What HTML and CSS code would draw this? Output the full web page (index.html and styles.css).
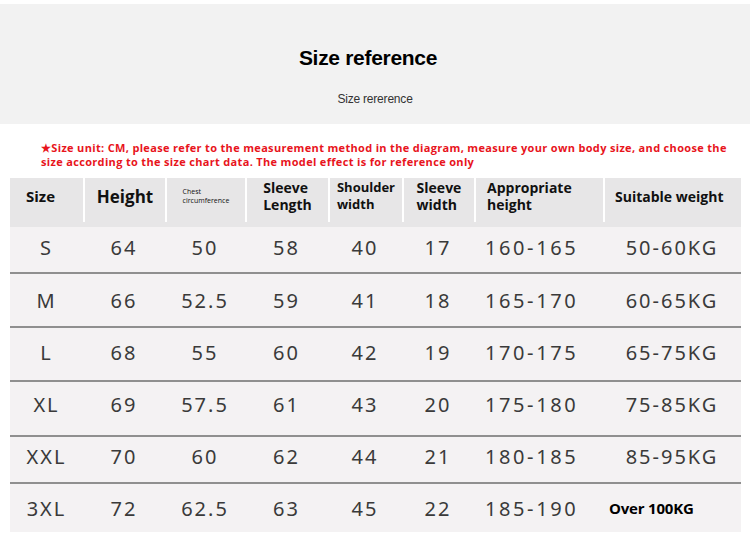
FILE: index.html
```html
<!DOCTYPE html>
<html>
<head>
<meta charset="utf-8">
<link rel="stylesheet" href="styles.css">
</head>
<body>
<div class="banner">
  <div class="title">Size reference</div>
  <div class="subtitle">Size rererence</div>
</div>
<p class="notice">★Size unit: CM, please refer to the measurement method in the diagram, measure your own body size, and choose the<br>size according to the size chart data. The model effect is for reference only</p>
<div class="chart">
  <div class="head">
    <div class="hc c-size"><span class="h15">Size</span></div>
    <div class="hc"><span class="h17">Height</span></div>
    <div class="hc"><span class="h7">Chest<br>circumference</span></div>
    <div class="hc"><span class="h14">Sleeve<br>Length</span></div>
    <div class="hc"><span class="h13">Shoulder<br>width</span></div>
    <div class="hc"><span class="h14">Sleeve<br>width</span></div>
    <div class="hc c-app"><span class="h14">Appropriate<br>height</span></div>
    <div class="hc c-wt"><span class="h14">Suitable weight</span></div>
  </div>
  <div class="row r1"><span>S</span><span>64</span><span>50</span><span>58</span><span>40</span><span>17</span><span class="rng">160-165</span><span>50-60KG</span></div>
  <div class="row r2"><span>M</span><span>66</span><span>52.5</span><span>59</span><span>41</span><span>18</span><span class="rng">165-170</span><span>60-65KG</span></div>
  <div class="row r3"><span>L</span><span>68</span><span>55</span><span>60</span><span>42</span><span>19</span><span class="rng">170-175</span><span>65-75KG</span></div>
  <div class="row r4"><span>XL</span><span>69</span><span>57.5</span><span>61</span><span>43</span><span>20</span><span class="rng">175-180</span><span>75-85KG</span></div>
  <div class="row r5"><span>XXL</span><span>70</span><span>60</span><span>62</span><span>44</span><span>21</span><span class="rng">180-185</span><span>85-95KG</span></div>
  <div class="row r6"><span>3XL</span><span>72</span><span>62.5</span><span>63</span><span>45</span><span>22</span><span class="rng">185-190</span><span class="over">Over 100KG</span></div>
</div>
</body>
</html>
```

FILE: styles.css
```css
* { box-sizing: border-box; }
body {
  margin: 0;
  background: #ffffff;
  font-family: "Open Sans", "Noto Sans", sans-serif;
  color: #333;
}
.banner {
  margin-top: 4px;
  height: 120px;
  background: #f2f2f2;
  display: flex;
  flex-direction: column;
  align-items: center;
  padding-top: 41px;
}
.title {
  margin-right: 14px;
  font-family: "Liberation Sans", sans-serif;
  font-weight: 700;
  font-size: 21px;
  line-height: 26px;
  color: #000;
  letter-spacing: -0.3px;
}
.subtitle {
  margin-top: 20px;
  font-family: "Liberation Sans", sans-serif;
  font-size: 12px;
  line-height: 16px;
  color: #333;
  letter-spacing: -0.2px;
}
.notice {
  margin: 17px 0 0 0;
  padding-left: 41px;
  font-family: "Open Sans", sans-serif;
  font-weight: 700;
  font-size: 11px;
  line-height: 14px;
  color: #e8141c;
  letter-spacing: 0.33px;
  white-space: nowrap;
}
.chart {
  margin: 9px 9px 0 10px;
}
.head, .row {
  display: grid;
  grid-template-columns: 73px 82px 80px 83px 74px 72px 129px 138px;
}
.head {
  height: 49px;
  background: #e7e6e7;
}
.hc {
  display: flex;
  align-items: center;
  justify-content: center;
  height: 44px;
  padding-bottom: 8px;
  border-left: 2px solid #ffffff;
  font-weight: 700;
  color: #111;
  text-align: left;
}
.hc.c-size { border-left: none; justify-content: flex-start; padding-left: 16px; }
.hc.c-app { justify-content: flex-start; padding-left: 11px; }
.hc.c-wt { justify-content: flex-start; padding-left: 10px; }
.h15 { font-size: 15px; }
.h17 { font-size: 17px; }
.h14 { font-size: 14px; line-height: 17px; }
.h13 { font-size: 13px; line-height: 17px; }
.h7 { font-size: 7px; line-height: 9px; font-weight: 400; }
.row {
  background: #f4f2f3;
  align-items: center;
  justify-items: center;
  font-family: "Noto Sans", sans-serif;
  font-size: 20px;
  letter-spacing: 2px;
  color: #3a3a3a;
  border-bottom: 2px solid #8f8f8f;
}
.r1 { height: 47px; padding-bottom: 5px; }
.r2 { height: 54px; }
.r3 { height: 54px; padding-bottom: 4px; }
.r4 { height: 55px; padding-bottom: 9px; }
.r5 { height: 47px; padding-bottom: 7px; }
.r6 { height: 48px; border-bottom: none; }
.rng { justify-self: start; padding-left: 11px; letter-spacing: 2.6px; }
.over {
  justify-self: start;
  padding-left: 6px;
  font-family: "Open Sans", sans-serif;
  font-weight: 700;
  font-size: 15px;
  letter-spacing: -0.2px;
  color: #000;
}
```
